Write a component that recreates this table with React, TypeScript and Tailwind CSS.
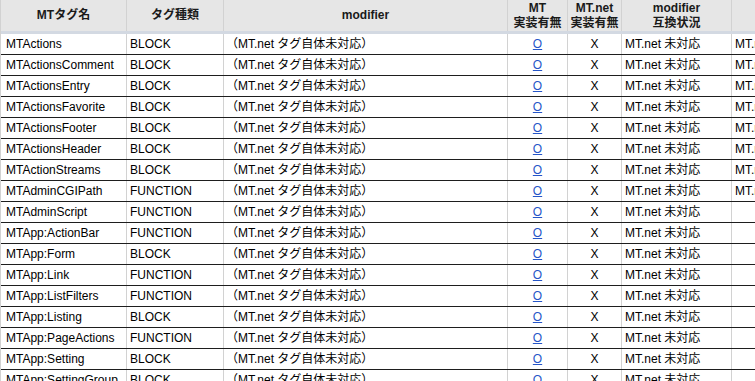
const FONT = 'font-["Liberation_Sans","Noto_Sans_CJK_JP",sans-serif]'

const ROWS: [string, string, boolean][] = [
  ['MTActions', 'BLOCK', true],
  ['MTActionsComment', 'BLOCK', true],
  ['MTActionsEntry', 'BLOCK', true],
  ['MTActionsFavorite', 'BLOCK', true],
  ['MTActionsFooter', 'BLOCK', true],
  ['MTActionsHeader', 'BLOCK', true],
  ['MTActionStreams', 'BLOCK', true],
  ['MTAdminCGIPath', 'FUNCTION', true],
  ['MTAdminScript', 'FUNCTION', false],
  ['MTApp:ActionBar', 'FUNCTION', false],
  ['MTApp:Form', 'BLOCK', false],
  ['MTApp:Link', 'FUNCTION', false],
  ['MTApp:ListFilters', 'FUNCTION', false],
  ['MTApp:Listing', 'BLOCK', false],
  ['MTApp:PageActions', 'FUNCTION', false],
  ['MTApp:Setting', 'BLOCK', false],
  ['MTApp:SettingGroup', 'BLOCK', false],
]

const cell = 'shrink-0 border-r border-[#d2d2d2] flex items-center overflow-hidden whitespace-nowrap'

export default function App() {
  return (
    <div className={`w-[755px] h-[381px] overflow-hidden bg-white text-[12px] text-black ${FONT}`}>
      <div className="w-[860px] border-l border-[#d2d2d2]">

        {/* Header */}
        <div className="flex h-[34px] box-border bg-[#e6e6e6] border-b-[3px] border-[#d3d9e2] font-bold text-[#1a1a1a] leading-[15px]">
          <div className={`${cell} w-[126px] justify-center`}>MTタグ名</div>
          <div className={`${cell} w-[97px] justify-center`}>タグ種類</div>
          <div className={`${cell} w-[284px] justify-center`}>modifier</div>
          <div className={`${cell} w-[60px] justify-center flex-col`}>
            <span>MT</span>
            <span>実装有無</span>
          </div>
          <div className={`${cell} w-[54px] justify-center flex-col`}>
            <span>MT.net</span>
            <span>実装有無</span>
          </div>
          <div className={`${cell} w-[110px] justify-center flex-col`}>
            <span>modifier</span>
            <span>互換状況</span>
          </div>
          <div className={`${cell} w-[110px]`}></div>
        </div>

        {/* Rows */}
        {ROWS.map(([name, type, last]) => (
          <div key={name} className="flex h-[21px] box-border border-b border-[#1e1e1e]">
            <div className={`${cell} w-[126px] pl-[5px]`}>{name}</div>
            <div className={`${cell} w-[97px] pl-[3px]`}>{type}</div>
            <div className={`${cell} w-[284px] pl-[2px]`}>（MT.net タグ自体未対応）</div>
            <div className={`${cell} w-[60px] justify-center`}>
              <a href="#" className="text-[#2555c8] underline">O</a>
            </div>
            <div className={`${cell} w-[54px] justify-center`}>X</div>
            <div className={`${cell} w-[110px] pl-[3px]`}>MT.net 未対応</div>
            <div className={`${cell} w-[110px] pl-[3px]`}>{last ? 'MT.net 未対応' : ''}</div>
          </div>
        ))}
      </div>
    </div>
  )
}
